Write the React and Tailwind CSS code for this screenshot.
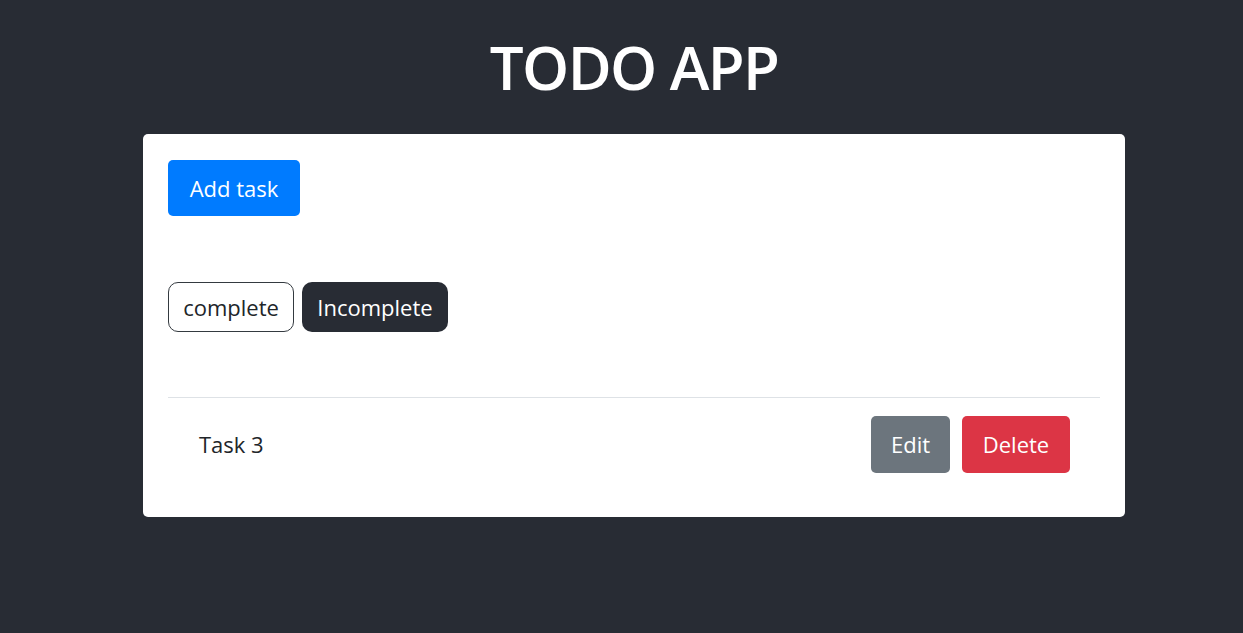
export default function App() {
  const font = { fontFamily: '"Open Sans", "Noto Sans", sans-serif' };
  return (
    <div className="min-h-[633px] bg-[#282c34] pt-[22px] pl-[25px]" style={font}>
      <h1 className="text-center text-white text-[60px] font-semibold leading-[90px] tracking-[-1.6px]">TODO APP</h1>
      <div className="mx-auto mt-[22px] w-[982px] rounded-[5px] bg-white px-[25px] pt-[26px] pb-[20px]">
        <button className="h-[56px] w-[132px] rounded-[5px] bg-[#007bff] text-[22px] text-white">Add task</button>
        <div className="mt-[66px] flex gap-[8px]">
          <button className="h-[50px] w-[126px] rounded-[10px] border border-[#343a40] bg-white text-[22px] text-[#212529]">complete</button>
          <button className="h-[50px] w-[146px] rounded-[10px] bg-[#282c34] text-[22px] text-white">Incomplete</button>
        </div>
        <div className="mt-[65px] border-t border-[#dee2e6] flex items-center justify-between pl-[31px] pr-[30px] pt-[18px] pb-[24px]">
          <span className="text-[22px] text-[#212529]">Task 3</span>
          <div className="flex gap-[12px]">
            <button className="h-[57px] w-[79px] rounded-[5px] bg-[#6c757d] text-[22px] text-white">Edit</button>
            <button className="h-[57px] w-[108px] rounded-[5px] bg-[#dc3545] text-[22px] text-white">Delete</button>
          </div>
        </div>
      </div>
    </div>
  );
}
